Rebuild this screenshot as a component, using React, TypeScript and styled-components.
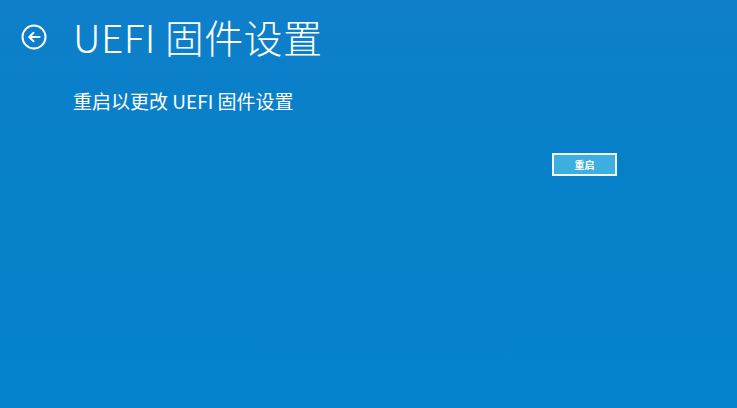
import React from 'react';
import styled, { createGlobalStyle } from 'styled-components';

const GlobalStyle = createGlobalStyle`
  html, body {
    margin: 0;
    padding: 0;
    height: 100%;
  }
  body {
    background: #0780c9;
    font-family: "Noto Sans CJK SC", "Noto Sans", sans-serif;
    color: #ffffff;
  }
  #root {
    min-height: 100%;
  }
`;

const Page = styled.div`
  width: 737px;
  height: 408px;
  box-sizing: border-box;
  padding: 14px 0 0 21px;
  background: linear-gradient(180deg, #0f7fca 0%, #0680c9 45%, #0583cd 100%);
  overflow: hidden;
`;

const Header = styled.div`
  display: flex;
  align-items: center;
  gap: 26px;
  height: 44px;
`;

const BackButton = styled.button`
  width: 26px;
  height: 26px;
  padding: 0;
  margin-top: 2px;
  border: none;
  background: transparent;
  display: flex;
  align-items: center;
  justify-content: center;
  cursor: pointer;
`;

const Title = styled.h1`
  margin: 0;
  font-size: 39px;
  font-weight: 300;
  line-height: 44px;
  letter-spacing: 0.4px;
`;

const Content = styled.div`
  display: flex;
  flex-direction: column;
  width: 544px;
  margin-left: 52px;
  margin-top: 31px;
`;

const Description = styled.p`
  margin: 0;
  font-size: 19px;
  line-height: 24px;
  font-weight: 400;
`;

const Actions = styled.div`
  display: flex;
  justify-content: flex-end;
  margin-top: 40px;
`;

const RestartButton = styled.button`
  width: 65px;
  height: 23px;
  box-sizing: border-box;
  border: 2px solid #f2f8fc;
  background: #3daee0;
  color: #ffffff;
  font-family: "Noto Sans CJK SC", sans-serif;
  font-size: 10px;
  font-weight: 700;
  line-height: 1;
  padding: 0;
  cursor: pointer;
`;

const BackIcon = () => (
  <svg width="26" height="26" viewBox="0 0 26 26" fill="none">
    <circle cx="13" cy="13" r="11.5" stroke="#fff" strokeWidth="2" />
    <path d="M18.5 13H8.5M12.5 8.8L8.2 13l4.3 4.2" stroke="#fff" strokeWidth="2" strokeLinecap="round" strokeLinejoin="round" />
  </svg>
);

export default function App() {
  return (
    <>
      <GlobalStyle />
      <Page>
        <Header>
          <BackButton aria-label="返回">
            <BackIcon />
          </BackButton>
          <Title>UEFI 固件设置</Title>
        </Header>
        <Content>
          <Description>重启以更改 UEFI 固件设置</Description>
          <Actions>
            <RestartButton>重启</RestartButton>
          </Actions>
        </Content>
      </Page>
    </>
  );
}
